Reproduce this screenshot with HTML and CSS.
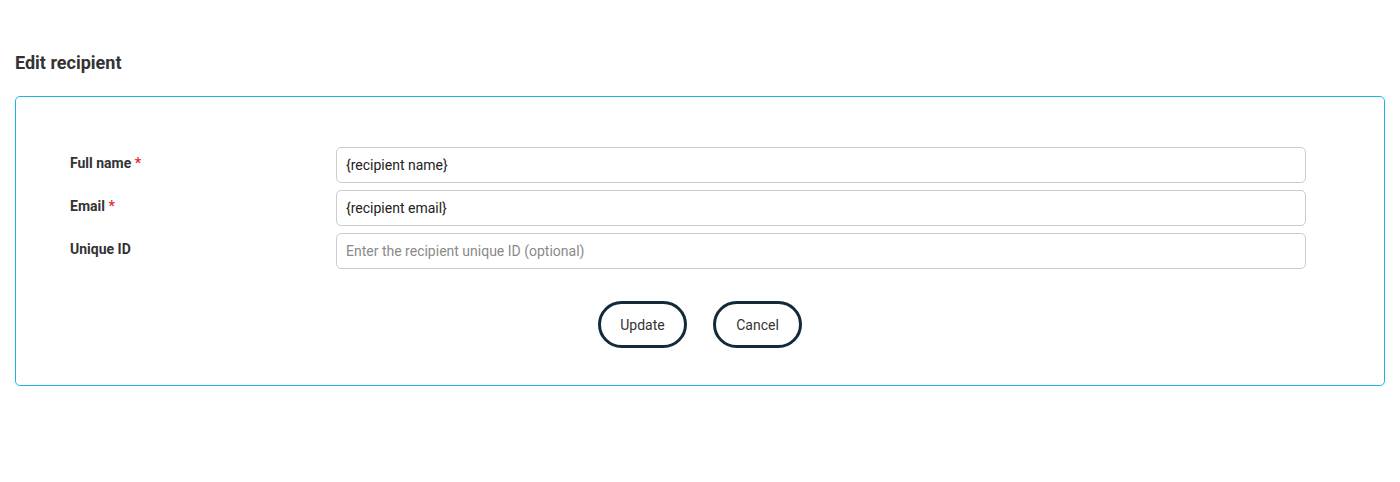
FILE: index.html
```html
<!DOCTYPE html>
<html lang="en">
<head>
    <meta charset="UTF-8">
    <meta name="viewport" content="width=device-width, initial-scale=1.0">
    <title>Edit recipient</title>
    <link rel="stylesheet" href="styles.css">
</head>
<body>
    <div class="page">
        <h3 class="page-title">Edit recipient</h3>
        <div class="card">
            <form class="recipient-form" onsubmit="return false">
                <div class="form-row">
                    <label class="form-label" for="fullName">Full name <span class="required">*</span></label>
                    <input type="text" id="fullName" class="form-input" value="{recipient name}">
                </div>
                <div class="form-row">
                    <label class="form-label" for="email">Email <span class="required">*</span></label>
                    <input type="text" id="email" class="form-input" value="{recipient email}">
                </div>
                <div class="form-row">
                    <label class="form-label" for="uniqueId">Unique ID</label>
                    <input type="text" id="uniqueId" class="form-input" placeholder="Enter the recipient unique ID (optional)">
                </div>
                <div class="form-actions">
                    <button class="pill-button">Update</button>
                    <button class="pill-button">Cancel</button>
                </div>
            </form>
        </div>
    </div>
</body>
</html>
```

FILE: styles.css
```css
body {
    font-family: Roboto, "Liberation Sans", Arial, sans-serif;
    background-color: #fff;
    color: #333;
    margin: 0;
    padding: 0;
}

.page {
    padding: 53px 15px 0 15px;
}

.page-title {
    margin: 0 0 23px 0;
    font-size: 18px;
    line-height: 20px;
    font-weight: 700;
    color: #333;
}

.card {
    border: 1px solid #1eb4e6;
    border-radius: 5px;
    padding: 50px 78px 37px 54px;
}

.form-row {
    display: grid;
    grid-template-columns: 266px 1fr;
    margin-bottom: 7px;
}

.form-label {
    font-size: 14px;
    font-weight: 700;
    line-height: 16px;
    padding-top: 8px;
    color: #333;
}

.required {
    color: #e03030;
}

.form-input {
    height: 36px;
    box-sizing: border-box;
    border: 1px solid #ccc;
    border-radius: 5px;
    padding: 0 9px;
    font-family: inherit;
    font-size: 14px;
    color: #222;
    outline: none;
}

.form-input::placeholder {
    color: #8a8a8a;
}

.form-actions {
    display: flex;
    justify-content: center;
    gap: 26px;
    margin-top: 32px;
    margin-right: -24px;
}

.pill-button {
    width: 89px;
    height: 47px;
    border: 3px solid #132a3a;
    border-radius: 24px;
    background-color: #fff;
    font-family: inherit;
    font-size: 14px;
    color: #333;
    cursor: pointer;
}

.pill-button:hover {
    background-color: #f5f5f5;
}
```
